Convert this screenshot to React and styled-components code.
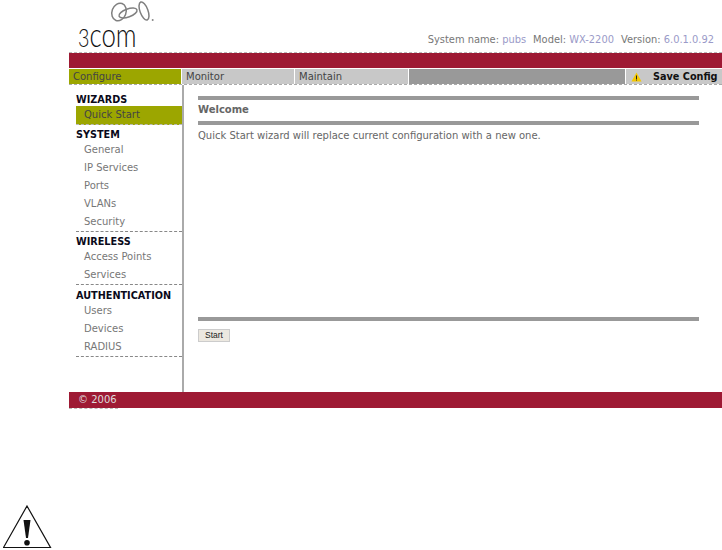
import React from "react";
import styled, { createGlobalStyle } from "styled-components";

const GlobalStyle = createGlobalStyle`
  html, body {
    margin: 0;
    background: #fff;
  }
  body {
    font-family: "DejaVu Sans", Verdana, sans-serif;
    font-size: 10px;
    color: #666;
  }
`;

const Page = styled.div`
  width: 722px;
  height: 550px;
  overflow: hidden;
`;

const Console = styled.div`
  margin-left: 69px;
`;

const Header = styled.header`
  height: 53px;
  display: flex;
  justify-content: space-between;
  align-items: flex-end;
  padding: 0 8px 0 9px;
  box-sizing: border-box;
  border-bottom: 1px dashed #bbb;
`;

const Logo = styled.div`
  position: relative;
  width: 90px;
  height: 52px;
`;

const LogoRings = styled.svg`
  position: absolute;
  left: 32px;
  top: 1px;
`;

const LogoWord = styled.span`
  position: absolute;
  left: 0;
  top: 19px;
  font-family: "Lato", sans-serif;
  font-weight: 300;
  font-size: 34px;
  line-height: 30px;
  color: #111;
  white-space: nowrap;
  transform: scaleX(0.76);
  transform-origin: left center;
`;

const LogoDigit = styled.span`
  font-size: 26px;
`;

const SystemInfo = styled.div`
  display: flex;
  gap: 7px;
  padding-bottom: 6px;
  font-size: 9.9px;
  line-height: 12px;
  color: #777;
`;

const InfoValue = styled.span`
  color: #9a9ac8;
`;

const RedBar = styled.div`
  height: 15px;
  background: #9e1a34;
`;

const Tabs = styled.nav`
  display: flex;
  height: 15px;
  border-top: 1px solid #fff;
  border-bottom: 1px dashed #aaa;
`;

const Tab = styled.div`
  width: ${(p) => p.$width}px;
  box-sizing: border-box;
  padding-left: 4px;
  line-height: 15px;
  color: #444;
  background: ${(p) => (p.$active ? "#9ca600" : "#c8c8c8")};
  border-right: 1px solid #fff;
`;

const TabFiller = styled.div`
  flex: 1;
  background: #999;
  border-right: 1px solid #fff;
`;

const SaveTab = styled.div`
  width: 96px;
  box-sizing: border-box;
  display: flex;
  align-items: center;
  padding-left: 5px;
  gap: 11px;
  background: #c8c8c8;
  font-size: 9.7px;
  font-weight: bold;
  color: #111;
`;

const Body = styled.div`
  display: flex;
  height: 307px;
`;

const Sidebar = styled.aside`
  width: 115px;
  box-sizing: border-box;
  padding: 9px 0 0 7px;
  border-right: 2px solid #aaa;
  flex: none;
`;

const NavGroup = styled.div`
  width: 106px;
  margin-bottom: ${(p) => p.$gap}px;
  border-bottom: ${(p) => (p.$plain ? "none" : "1px dashed #888")};
`;

const GroupTitle = styled.div`
  font-size: 9.7px;
  font-weight: bold;
  line-height: 12px;
  color: #0a0a1a;
`;

const NavItem = styled.div`
  height: 18px;
  line-height: 18px;
  padding-left: 8px;
  color: ${(p) => (p.$active ? "#444" : "#777")};
  background: ${(p) => (p.$active ? "#9ca600" : "transparent")};
  border-bottom: ${(p) => (p.$active ? "1px dashed #bbb" : "none")};
`;

const Content = styled.main`
  flex: 1;
  padding: 11px 23px 0 14px;
  display: flex;
  flex-direction: column;
`;

const Rule = styled.div`
  height: 4px;
  background: #999;
  flex: none;
`;

const Title = styled.h1`
  margin: 0;
  height: 21px;
  font-size: 10px;
  font-weight: bold;
  line-height: 19px;
  color: #666;
`;

const Message = styled.p`
  margin: 3px 0 0;
  height: 189px;
  line-height: 15px;
  color: #666;
`;

const StartButton = styled.button`
  align-self: flex-start;
  margin-top: 8px;
  width: 32px;
  height: 13px;
  padding: 0;
  font-family: "Liberation Sans", Arial, sans-serif;
  font-size: 8.5px;
  line-height: 11px;
  color: #222;
  background: #ece8e0;
  border: 1px solid #ccc;
`;

const Footer = styled.footer`
  height: 16px;
  padding-left: 9px;
  background: #9e1a34;
  line-height: 16px;
  color: #ddd;
`;

const FooterEdge = styled.div`
  width: 49px;
  border-top: 1px dashed #bbb;
`;

const Caution = styled.svg`
  display: block;
  margin: 96px 0 0 3px;
`;

const navGroups = [
  { title: "WIZARDS", items: ["Quick Start"], active: "Quick Start", plain: true, gap: 4 },
  { title: "SYSTEM", items: ["General", "IP Services", "Ports", "VLANs", "Security"], gap: 4 },
  { title: "WIRELESS", items: ["Access Points", "Services"], gap: 5 },
  { title: "AUTHENTICATION", items: ["Users", "Devices", "RADIUS"], gap: 0 },
];

const App = () => {
  return (
    <Page>
      <GlobalStyle />
      <Console>
        <Header>
          <Logo>
            <LogoRings width="46" height="24" viewBox="0 0 46 24">
              <g fill="none" stroke="#808080" strokeWidth="1.5">
                <ellipse cx="9" cy="11" rx="7" ry="9" transform="rotate(20 9 11)" />
                <ellipse cx="18" cy="12" rx="9.5" ry="4" transform="rotate(-20 18 12)" />
                <ellipse cx="34" cy="10" rx="4" ry="9.5" transform="rotate(-20 34 10)" />
              </g>
              <circle cx="42.7" cy="19" r="1" fill="#888" />
            </LogoRings>
            <LogoWord><LogoDigit>3</LogoDigit>com</LogoWord>
          </Logo>
          <SystemInfo>
            <span>System name: <InfoValue>pubs</InfoValue></span>
            <span>Model: <InfoValue>WX-2200</InfoValue></span>
            <span>Version: <InfoValue>6.0.1.0.92</InfoValue></span>
          </SystemInfo>
        </Header>
        <RedBar />
        <Tabs>
          <Tab $width={113} $active>Configure</Tab>
          <Tab $width={113}>Monitor</Tab>
          <Tab $width={114}>Maintain</Tab>
          <TabFiller />
          <SaveTab>
            <svg width="11" height="10" viewBox="0 0 11 10">
              <path d="M5.5 0.5 L10.5 9.5 H0.5 Z" fill="#f5c800" />
              <rect x="5" y="3.5" width="1" height="3.5" fill="#222" />
              <rect x="5" y="7.5" width="1" height="1" fill="#222" />
            </svg>
            Save Config
          </SaveTab>
        </Tabs>
        <Body>
          <Sidebar>
            {navGroups.map((group) => (
              <NavGroup key={group.title} $plain={group.plain} $gap={group.gap}>
                <GroupTitle>{group.title}</GroupTitle>
                {group.items.map((item) => (
                  <NavItem key={item} $active={item === group.active}>{item}</NavItem>
                ))}
              </NavGroup>
            ))}
          </Sidebar>
          <Content>
            <Rule />
            <Title>Welcome</Title>
            <Rule />
            <Message>Quick Start wizard will replace current configuration with a new one.</Message>
            <Rule />
            <StartButton>Start</StartButton>
          </Content>
        </Body>
        <Footer>© 2006</Footer>
        <FooterEdge />
      </Console>
      <Caution width="50" height="44" viewBox="0 0 50 44">
        <path d="M24 1 L47.5 42.5 H0.5 Z" fill="#fff" stroke="#111" strokeWidth="1.2" />
        <path d="M20.5 15 H27.5 L25 33 H23 Z" fill="#111" />
        <circle cx="24" cy="37.7" r="2.8" fill="#111" />
      </Caution>
    </Page>
  );
};

export default App;
